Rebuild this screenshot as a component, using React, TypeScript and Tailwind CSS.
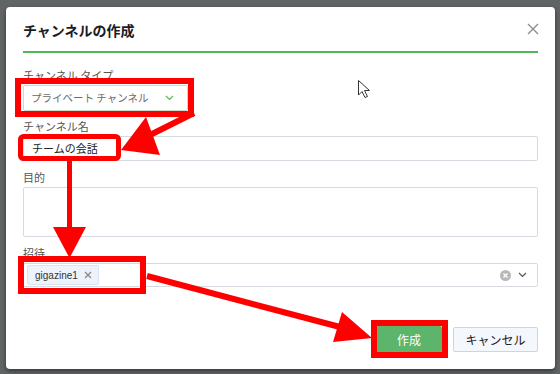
import React from "react";

const jp = "font-['Noto_Sans_CJK_JP','Noto_Sans',sans-serif]";

function Label({ children }: { children: React.ReactNode }) {
  return <div className="text-[11px] leading-[16px] text-[#555] mb-[2px]">{children}</div>;
}

export default function App() {
  return (
    <div className={`w-[560px] h-[374px] bg-[#616464] relative overflow-hidden pt-[7px] pl-[6px] ${jp}`}>
      <div className="w-[549px] h-[362px] bg-white rounded-[4px] px-[17px] flex flex-col shadow-[0_2px_4px_rgba(0,0,0,0.45)]">
        <div className="pt-[13px] h-[33px] flex items-center justify-between">
          <div className="text-[14px] leading-[20px] font-bold text-[#1d1c1d]">チャンネルの作成</div>
          <svg width="12" height="12" viewBox="0 0 12 12" className="mr-[-1px] mt-[-2px]">
            <path d="M1 1 L11 11 M11 1 L1 11" stroke="#8e8e8e" strokeWidth="1.4" />
          </svg>
        </div>
        <div className="mt-[11px] h-[2px] bg-[#4fb758]" />

        <div className="mt-[14px]">
          <Label>チャンネル タイプ</Label>
          <div className="h-[26px] w-[165px] border border-[#c9dcc9] rounded-[2px] flex items-center justify-between pl-[7px] pr-[13px]">
            <span className="text-[10.5px] text-[#6b6b6b]">プライベート チャンネル</span>
            <svg width="9" height="6" viewBox="0 0 9 6">
              <path d="M1 1 L4.5 4.5 L8 1" stroke="#5cb85c" strokeWidth="1.2" fill="none" />
            </svg>
          </div>
        </div>

        <div className="mt-[7px]">
          <Label>チャンネル名</Label>
          <div className="h-[25px] border border-[#d6dbe1] rounded-[2px] flex items-center pl-[8px]">
            <span className="text-[11px] text-[#222]">チームの会話</span>
          </div>
        </div>

        <div className="mt-[8px]">
          <Label>目的</Label>
          <div className="h-[50px] border border-[#d6dbe1] rounded-[2px]" />
        </div>

        <div className="mt-[8px]">
          <Label>招待</Label>
          <div className="h-[24px] border border-[#d6dbe1] rounded-[2px] flex items-center justify-between pl-[3px] pr-[10px]">
            <div className="h-[20px] flex items-center gap-[6px] bg-[#eef3fb] border border-[#d8e3f4] rounded-[2px] pl-[7px] pr-[6px]">
              <span className="text-[10px] text-[#333] font-['Liberation_Sans',sans-serif]">gigazine1</span>
              <svg width="8" height="8" viewBox="0 0 8 8">
                <path d="M1 1 L7 7 M7 1 L1 7" stroke="#888" strokeWidth="1.3" />
              </svg>
            </div>
            <div className="flex items-center gap-[7px]">
              <svg width="11" height="11" viewBox="0 0 11 11">
                <circle cx="5.5" cy="5.5" r="5.5" fill="#b8b8b8" />
                <path d="M3.5 3.5 L7.5 7.5 M7.5 3.5 L3.5 7.5" stroke="#fff" strokeWidth="1.4" />
              </svg>
              <svg width="9" height="6" viewBox="0 0 9 6">
                <path d="M1 1 L4.5 4.5 L8 1" stroke="#555" strokeWidth="1.2" fill="none" />
              </svg>
            </div>
          </div>
        </div>

        <div className="mt-[39px] flex justify-end items-start gap-[11px]">
          <div className="w-[66px] h-[27px] rounded-[2px] bg-[#5db56b] flex items-center justify-center text-[12px] text-white">
            作成
          </div>
          <div className="w-[85px] h-[25px] mt-[1px] rounded-[2px] bg-[#f4f7fc] border border-[#cdd5e0] flex items-center justify-center text-[12px] text-[#222]">
            キャンセル
          </div>
        </div>
      </div>

      <svg className="absolute inset-0 pointer-events-none" width="560" height="374" viewBox="0 0 560 374">
        {/* red boxes */}
        <rect x="18" y="81" width="173" height="33" fill="none" stroke="#ff0000" strokeWidth="6" />
        <rect x="20.5" y="136.5" width="98" height="22" rx="3" fill="none" stroke="#ff0000" strokeWidth="5" />
        <rect x="21" y="259" width="122" height="32" fill="none" stroke="#ff0000" strokeWidth="6" />
        <rect x="374" y="323" width="71" height="32" fill="none" stroke="#ff0000" strokeWidth="6" />
        {/* arrow 1 */}
        <line x1="194" y1="113" x2="150" y2="135" stroke="#ff0000" strokeWidth="6" />
        <polygon points="121,150 146,117 160,155" fill="#ff0000" />
        {/* arrow 2 */}
        <line x1="69.5" y1="160" x2="69.5" y2="230" stroke="#ff0000" strokeWidth="5" />
        <polygon points="53,227 86,227 69.5,258" fill="#ff0000" />
        {/* arrow 3 */}
        <line x1="147" y1="276" x2="340" y2="327" stroke="#ff0000" strokeWidth="6" />
        <polygon points="372,338 342,312 333,342" fill="#ff0000" />
        {/* cursor */}
        <path d="M358.5 80.5 L358.5 95 L362 91.5 L365 97.5 L367.5 96.5 L364.5 90.5 L369.5 90.5 Z" fill="#fff" stroke="#333" strokeWidth="1" strokeLinejoin="round" />
      </svg>
    </div>
  );
}
